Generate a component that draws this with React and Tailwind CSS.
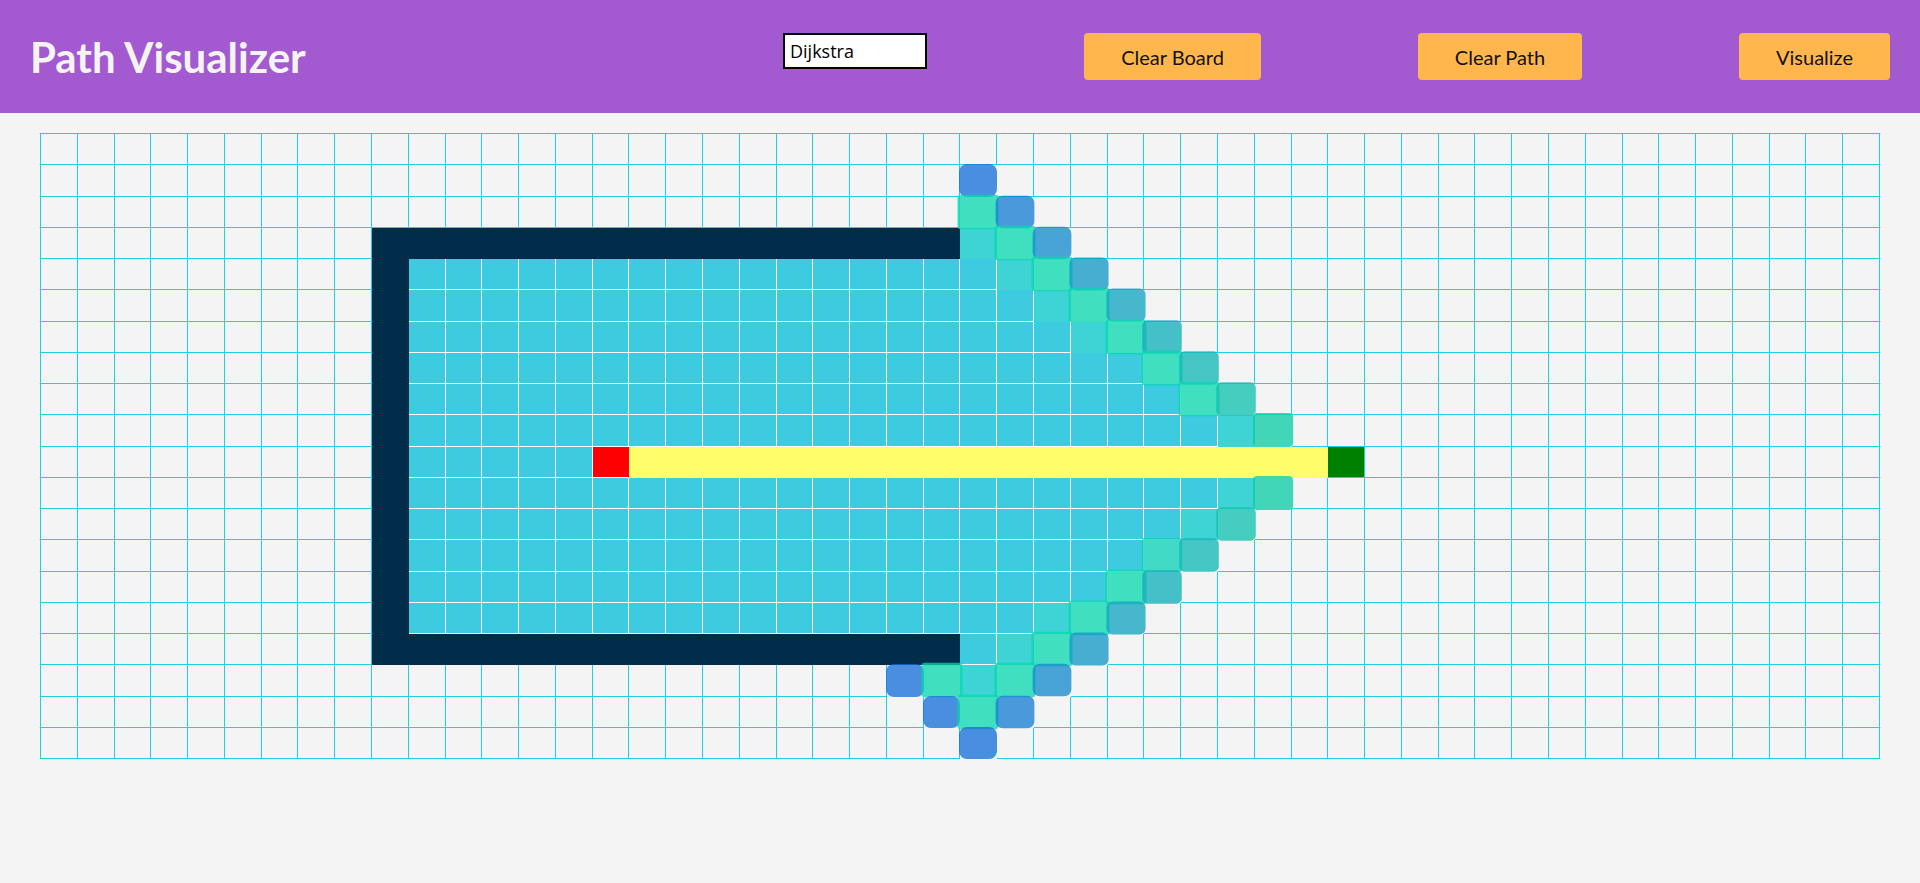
/**
 * App.jsx
 * -------
 * Path Visualizer — header with algorithm picker + actions, and the board
 * frozen mid-animation of a Dijkstra run.
 */

const ROWS = 20
const COLS = 50
const START = [10, 15]
const FINISH = [10, 35]

// U-shaped wall around the start node, open to the right
function isWall(r, c) {
  if ((r === 3 || r === 16) && c >= 9 && c <= 24) return true
  if (c === 9 && r >= 3 && r <= 16) return true
  return false
}

// BFS distances from the start node
function computeDistances() {
  const dist = Array.from({ length: ROWS }, () => Array(COLS).fill(Infinity))
  const queue = [START]
  dist[START[0]][START[1]] = 0
  while (queue.length) {
    const [r, c] = queue.shift()
    for (const [dr, dc] of [[-1, 0], [1, 0], [0, -1], [0, 1]]) {
      const nr = r + dr
      const nc = c + dc
      if (nr < 0 || nc < 0 || nr >= ROWS || nc >= COLS) continue
      if (isWall(nr, nc) || dist[nr][nc] !== Infinity) continue
      dist[nr][nc] = dist[r][c] + 1
      queue.push([nr, nc])
    }
  }
  return dist
}

const DIST = computeDistances()

// Flat cells: base look of the square itself
const TONES = {
  U: 'bg-[#f4f4f4] border-[#1fd2e3]',
  W: 'bg-[#012c4a] border-[#012c4a]',
  L: 'bg-[#3dcbe0] border-white',
  T: 'bg-[#3ed4d5] border-transparent',
  S: 'bg-[#ff0000] border-r-[#ff0000] border-b-white',
  F: 'bg-[#008000] border-[#1fd2e3]',
  P: 'bg-[#fffe6a] border-[#fffe6a]',
  A: 'bg-[#f4f4f4] border-transparent',
}

// Cells still animating: translucent, slightly scaled, rounded
const GLOWS = {
  G: 'bg-[rgba(4,216,175,0.75)] scale-[1.08] rounded-[3px]',
  G2: 'bg-[rgba(4,210,183,0.75)] scale-[1.06] rounded-[3px]',
  v1: 'bg-[rgba(7,204,164,0.75)] scale-[1.06] rounded-[4px]',
  v2: 'bg-[rgba(11,192,175,0.75)] scale-[1.04] rounded-[5px]',
  v3: 'bg-[rgba(11,183,180,0.75)] scale-[1.04] rounded-[5px]',
  v4: 'bg-[rgba(11,173,185,0.75)] scale-[1.04] rounded-[5px]',
  v5: 'bg-[rgba(12,163,191,0.75)] scale-[1.03] rounded-[6px]',
  v6: 'bg-[rgba(13,151,199,0.75)] scale-[1.03] rounded-[6px]',
  v7: 'bg-[rgba(15,137,204,0.75)] scale-[1.02] rounded-[7px]',
  v8: 'bg-[rgba(17,123,209,0.75)] scale-[1.02] rounded-[7px]',
  v9: 'bg-[rgba(17,108,217,0.75)] scale-[1.0] rounded-[8px]',
}

function cellKind(r, c) {
  if (isWall(r, c)) return { tone: 'W' }
  if (r === START[0] && c === START[1]) return { tone: 'S' }
  if (r === FINISH[0] && c === FINISH[1]) return { tone: 'F' }
  if (r === 10 && c > START[1] && c < FINISH[1]) return { tone: 'P' }

  const d = DIST[r][c]
  if (d <= 16) return { tone: 'L' }
  if (d === 17) return { tone: r <= 6 || r >= 15 ? 'T' : 'L' }
  if (d === 18) {
    if (r === 9 || r === 11 || r === 12) return { tone: 'T' }
    if (r === 13) return { tone: 'A', glow: 'G2' }
    return { tone: 'A', glow: 'G' }
  }
  if (d === 19) {
    if (r === 2 && c === 24) return { tone: 'U' } // not reached yet
    if (c <= 24) return { tone: 'A', glow: 'v9' }
    return { tone: 'A', glow: `v${Math.abs(r - 10)}` }
  }
  return { tone: 'U' }
}

const CELLS = []
for (let r = 0; r < ROWS; r++) {
  for (let c = 0; c < COLS; c++) {
    CELLS.push({ key: `${r}-${c}`, ...cellKind(r, c) })
  }
}

function Header() {
  return (
    <header className="h-[113px] bg-[#a35ad0] flex items-center justify-between pl-[30px] pr-[30px]">
      <h1 className="font-['Lato',sans-serif] text-[42px] font-bold text-[#f4f4f4] leading-none">
        Path Visualizer
      </h1>

      <div className="flex items-start gap-[157px]">
        <input
          type="text"
          defaultValue="Dijkstra"
          aria-label="Algorithm"
          className="w-[144px] h-[36px] border-2 border-black bg-white px-[5px] font-['Open_Sans',sans-serif] text-[18px] text-black outline-none"
        />
        <button className="w-[177px] h-[47px] rounded-[4px] bg-[#ffb74d] font-['Lato',sans-serif] text-[20px] text-[#111]">
          Clear Board
        </button>
        <button className="w-[164px] h-[47px] rounded-[4px] bg-[#ffb74d] font-['Lato',sans-serif] text-[20px] text-[#111]">
          Clear Path
        </button>
        <button className="w-[151px] h-[47px] rounded-[4px] bg-[#ffb74d] font-['Lato',sans-serif] text-[20px] text-[#111]">
          Visualize
        </button>
      </div>
    </header>
  )
}

function Board() {
  return (
    <div className="ml-10 mt-5 w-[1840px] h-[626px] grid grid-cols-[repeat(50,minmax(0,1fr))] grid-rows-[repeat(20,minmax(0,1fr))] border-l border-t border-[#1fd2e3]">
      {CELLS.map((cell) => (
        <div
          key={cell.key}
          className={[
            'border-r border-b',
            TONES[cell.tone],
            cell.glow ? 'relative' : '',
          ].join(' ')}
        >
          {cell.glow && (
            <div className={['absolute -inset-px z-10', GLOWS[cell.glow]].join(' ')} />
          )}
        </div>
      ))}
    </div>
  )
}

export default function App() {
  return (
    <div className="min-h-screen bg-[#f4f4f4]">
      <Header />
      <Board />
    </div>
  )
}
